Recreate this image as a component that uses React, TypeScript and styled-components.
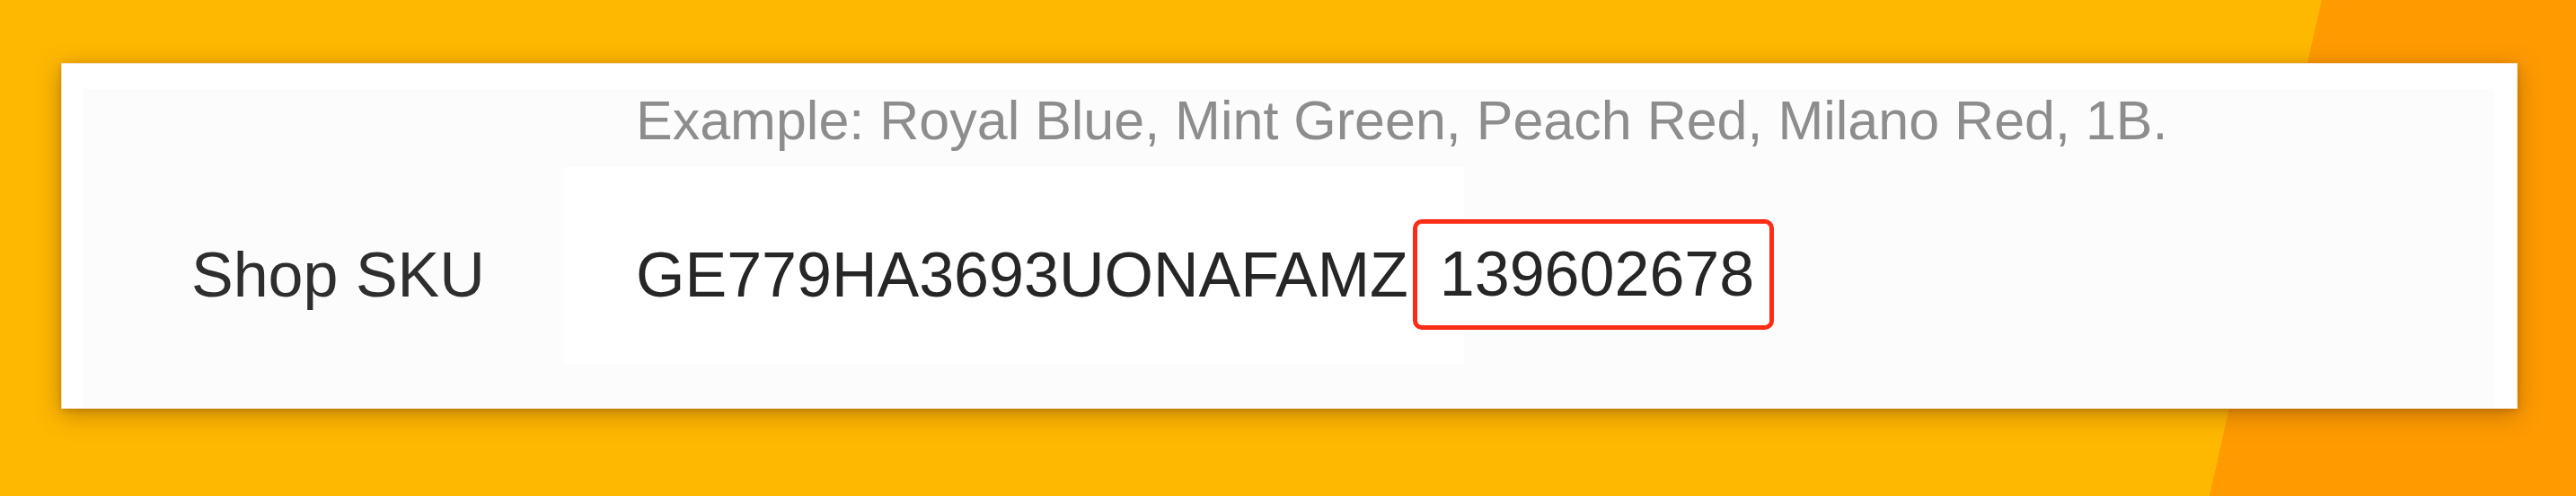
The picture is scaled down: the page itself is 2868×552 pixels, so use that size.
import React from "react";
import styled, { createGlobalStyle } from "styled-components";

const GlobalStyle = createGlobalStyle`
  html, body {
    margin: 0;
    padding: 0;
    width: 100%;
    height: 100%;
  }
  body {
    font-family: "Liberation Sans", Arial, sans-serif;
    background: linear-gradient(102.76deg, #ffb800 2521px, #ff9b00 2521px);
  }
  #root {
    height: 100%;
  }
`;

const Page = styled.div`
  box-sizing: border-box;
  width: 2868px;
  height: 552px;
  padding: 70px 65px 0 68px;
`;

const Card = styled.section`
  box-sizing: border-box;
  width: 2735px;
  height: 385px;
  background: #ffffff;
  border: 1px solid #f6dcc0;
  box-shadow: 0 6px 26px rgba(90, 45, 0, 0.38), 0 2px 6px rgba(90, 45, 0, 0.2);
  padding: 28px 25px 0 23px;
  display: flex;
`;

const Panel = styled.div`
  flex: 1;
  background: #fcfcfc;
  display: grid;
  grid-template-columns: 616px 1fr;
  grid-template-rows: auto auto;
  row-gap: 75px;
  align-content: start;
`;

const LabelCell = styled.div`
  padding-left: 121px;
  display: flex;
  align-items: center;
  font-size: 70px;
  line-height: 80px;
  color: #2e2e2e;
`;

const HintCell = styled.div`
  grid-column: 2;
  font-size: 61px;
  line-height: 70px;
  color: #8d8d8d;
  white-space: nowrap;
`;

const ValueCell = styled.div`
  display: flex;
  align-items: center;
  font-size: 70px;
  line-height: 80px;
  color: #262626;
  white-space: nowrap;
  background: linear-gradient(90deg, #ffffff 0, #ffffff 1002px, transparent 1002px);
  margin: -58px 0 -38px -80px;
  padding: 58px 0 38px 80px;
`;

const SkuText = styled.span`
  display: block;
`;

const Highlight = styled.span`
  display: block;
  margin-left: 5px;
  border: 5px solid #fb2d16;
  border-radius: 10px;
  padding: 16px 17px 17px 25px;
  background: #ffffff;
`;

export default function App() {
  return (
    <>
      <GlobalStyle />
      <Page>
        <Card>
          <Panel>
            <HintCell>Example: Royal Blue, Mint Green, Peach Red, Milano Red, 1B.</HintCell>
            <LabelCell>Shop SKU</LabelCell>
            <ValueCell>
              <SkuText>GE779HA3693UONAFAMZ</SkuText>
              <Highlight>139602678</Highlight>
            </ValueCell>
          </Panel>
        </Card>
      </Page>
    </>
  );
}
